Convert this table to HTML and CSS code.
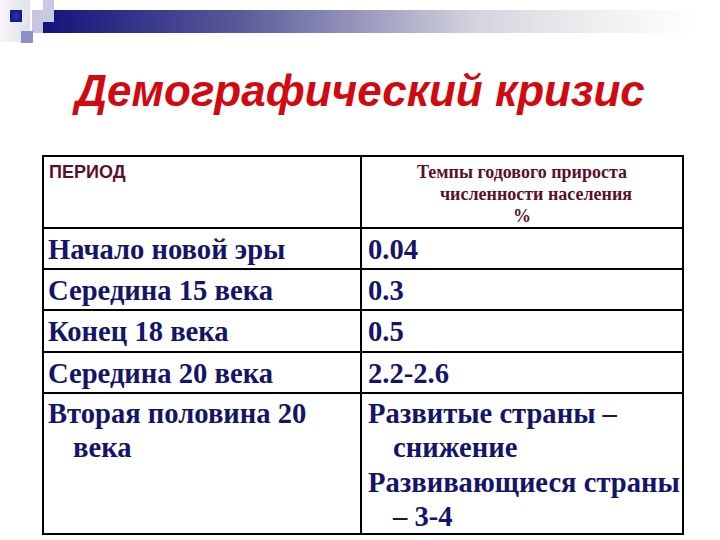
FILE: index.html
```html
<!DOCTYPE html>
<html lang="ru">
<head>
<meta charset="utf-8">
<link rel="stylesheet" href="styles.css">
</head>
<body>
<div class="deco">
<svg width="720" height="45" viewBox="0 0 720 45" xmlns="http://www.w3.org/2000/svg">
<defs>
<linearGradient id="bar" x1="0" x2="1" y1="0" y2="0">
<stop offset="0" stop-color="#13137c"/>
<stop offset="0.3" stop-color="#5a5a9a"/>
<stop offset="0.66" stop-color="#d4d4de"/>
<stop offset="0.85" stop-color="#f0f0f2"/>
<stop offset="1" stop-color="#ffffff"/>
</linearGradient>
<linearGradient id="strip" x1="0" x2="1" y1="0" y2="0">
<stop offset="0" stop-color="#f6f6f9"/>
<stop offset="1" stop-color="#e0e0ea"/>
</linearGradient>
</defs>
<rect x="0" y="0" width="30" height="42" fill="url(#strip)"/>
<rect x="43" y="10" width="657" height="23" fill="url(#bar)"/>
<rect x="43" y="0" width="11" height="22" fill="#c9c9e3"/>
<rect x="32" y="10" width="11" height="23" fill="#c6c6de"/>
<rect x="21" y="31" width="12" height="12" fill="#8e8ec9"/>
<rect x="10" y="10" width="12" height="12" fill="#1a1a90"/>
<rect x="13" y="13" width="6" height="6" fill="#2a2aa8"/>
</svg>
</div>
<h1 class="title">Демографический кризис</h1>
<table class="data">
<tr class="head">
<th class="h-period">ПЕРИОД</th>
<th class="h-rate"><span class="l1">Темпы годового прироста</span><span class="l2">численности населения</span><span class="l3">%</span></th>
</tr>
<tr class="row"><td>Начало новой эры</td><td class="val">0.04</td></tr>
<tr class="row"><td>Середина 15 века</td><td class="val">0.3</td></tr>
<tr class="row tall"><td>Конец 18 века</td><td class="val">0.5</td></tr>
<tr class="row"><td>Середина 20 века</td><td class="val">2.2-2.6</td></tr>
<tr class="last">
<td><p class="hang">Вторая половина 20<br>века</p></td>
<td class="val"><p class="hang">Развитые страны –<br>снижение</p><p class="hang">Развивающиеся страны<br>– 3-4</p></td>
</tr>
</table>
</body>
</html>
```
FILE: styles.css
```css
html, body {
  margin: 0;
  padding: 0;
  background: #ffffff;
}
.deco {
  height: 45px;
  line-height: 0;
}
.deco svg {
  display: block;
}
.title {
  margin: 18px 0 0 0;
  height: 92px;
  font-family: "Liberation Sans", Arial, sans-serif;
  font-style: italic;
  font-weight: bold;
  font-size: 44px;
  line-height: 56px;
  color: #d10a12;
  text-align: center;
}
.data {
  margin-left: 42px;
  border-collapse: collapse;
  width: 642px;
  table-layout: fixed;
  font-family: "Liberation Serif", "Times New Roman", serif;
  font-weight: bold;
  color: #141468;
}
.data th, .data td {
  box-sizing: border-box;
  border: 2px solid #000;
  padding: 0;
  vertical-align: top;
  text-align: left;
}
.data th:first-child, .data td:first-child {
  width: 318px;
}
.head th {
  height: 72px;
  color: #5a0f2c;
}
.h-period {
  font-family: "Liberation Sans", Arial, sans-serif;
  font-size: 18px;
  padding: 5px 0 0 5px !important;
  line-height: 20px;
}
.h-rate {
  font-size: 18px;
  line-height: 22px;
  padding-top: 4px !important;
  text-align: center !important;
}
.h-rate span {
  display: block;
}
.h-rate .l2 {
  padding-left: 28px;
}
.row td {
  height: 41px;
  font-size: 28.6px;
  line-height: 32px;
  padding: 5px 0 0 4px;
}
.row.tall td {
  height: 42px;
}
.row td.val, .last td.val {
  padding-left: 6px;
}
.last td {
  height: 141px;
  font-size: 28.6px;
  line-height: 33.5px;
  padding: 3px 0 0 4px;
}
.hang {
  margin: 0;
  padding-left: 25px;
  text-indent: -25px;
  white-space: nowrap;
}
.hang + .hang {
  margin-top: 2px;
}
```
